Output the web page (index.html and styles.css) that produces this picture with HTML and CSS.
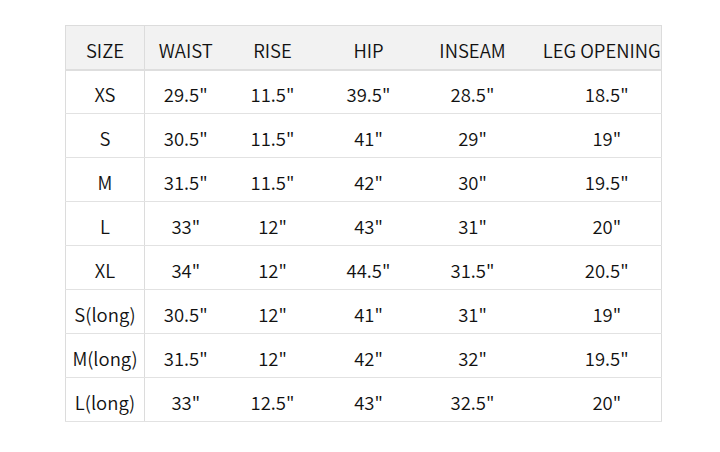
FILE: index.html
```html
<!DOCTYPE html>
<html>
<head>
<meta charset="utf-8">
<link rel="stylesheet" href="styles.css">
</head>
<body>
<table class="size-table">
  <colgroup>
    <col class="c-size"><col class="c-waist"><col class="c-rise"><col class="c-hip"><col class="c-inseam"><col class="c-leg">
  </colgroup>
  <thead>
    <tr><th>SIZE</th><th>WAIST</th><th>RISE</th><th>HIP</th><th>INSEAM</th><th class="leg">LEG OPENING</th></tr>
  </thead>
  <tbody>
    <tr><td>XS</td><td>29.5"</td><td>11.5"</td><td>39.5"</td><td>28.5"</td><td class="leg">18.5"</td></tr>
    <tr><td>S</td><td>30.5"</td><td>11.5"</td><td>41"</td><td>29"</td><td class="leg">19"</td></tr>
    <tr><td>M</td><td>31.5"</td><td>11.5"</td><td>42"</td><td>30"</td><td class="leg">19.5"</td></tr>
    <tr><td>L</td><td>33"</td><td>12"</td><td>43"</td><td>31"</td><td class="leg">20"</td></tr>
    <tr><td>XL</td><td>34"</td><td>12"</td><td>44.5"</td><td>31.5"</td><td class="leg">20.5"</td></tr>
    <tr><td>S(long)</td><td>30.5"</td><td>12"</td><td>41"</td><td>31"</td><td class="leg">19"</td></tr>
    <tr><td>M(long)</td><td>31.5"</td><td>12"</td><td>42"</td><td>32"</td><td class="leg">19.5"</td></tr>
    <tr><td>L(long)</td><td>33"</td><td>12.5"</td><td>43"</td><td>32.5"</td><td class="leg">20"</td></tr>
  </tbody>
</table>
</body>
</html>
```
FILE: styles.css
```css
html, body {
  margin: 0;
  padding: 0;
  background: #ffffff;
}

body {
  padding: 25px 0 0 65px;
  font-family: "Noto Sans CJK SC", "Noto Sans", sans-serif;
  color: #111111;
}

.size-table {
  border-collapse: collapse;
  table-layout: fixed;
  width: 597px;
  border: 1px solid #dcdcdc;
  font-size: 18.5px;
}

.c-size { width: 79px; }
.c-waist { width: 82px; }
.c-rise { width: 92px; }
.c-hip { width: 100px; }
.c-inseam { width: 108px; }
.c-leg { width: 135px; }

.size-table th,
.size-table td {
  height: 44px;
  padding: 5px 0 0 0;
  box-sizing: border-box;
  text-align: center;
  vertical-align: middle;
  font-weight: 350;
  white-space: nowrap;
  line-height: 1;
  border-bottom: 1px solid #e2e2e2;
}

.size-table thead th {
  background: #f2f2f2;
  border-bottom: 2px solid #dedede;
}

.size-table th:first-child,
.size-table td:first-child {
  border-right: 1px solid #dcdcdc;
}

.size-table th.leg {
  padding-left: 16px;
}

.size-table td.leg {
  padding-left: 26px;
}
```
